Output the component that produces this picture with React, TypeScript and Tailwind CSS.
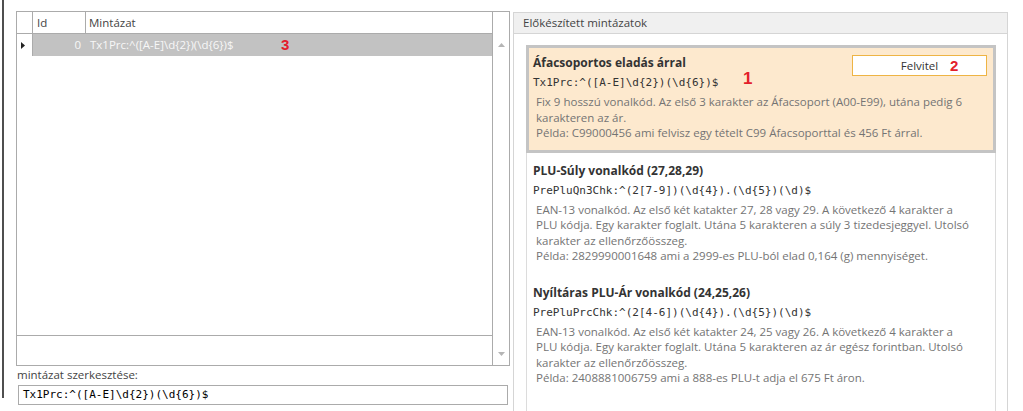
const items = [
  {
    title: 'Áfacsoportos eladás árral',
    pattern: 'Tx1Prc:^([A-E]\\d{2})(\\d{6})$',
    lines: [
      'Fix 9 hosszú vonalkód. Az első 3 karakter az Áfacsoport (A00-E99), utána pedig 6',
      'karakteren az ár.',
      'Példa: C99000456 ami felvisz egy tételt C99 Áfacsoporttal és 456 Ft árral.',
    ],
    selected: true,
  },
  {
    title: 'PLU-Súly vonalkód (27,28,29)',
    pattern: 'PrePluQn3Chk:^(2[7-9])(\\d{4}).(\\d{5})(\\d)$',
    lines: [
      'EAN-13 vonalkód. Az első két katakter 27, 28 vagy 29. A következő 4 karakter a',
      'PLU kódja. Egy karakter foglalt. Utána 5 karakteren a súly 3 tizedesjeggyel. Utolsó',
      'karakter az ellenőrzőösszeg.',
      'Példa: 2829990001648 ami a 2999-es PLU-ból elad 0,164 (g) mennyiséget.',
    ],
    selected: false,
  },
  {
    title: 'Nyíltáras PLU-Ár vonalkód (24,25,26)',
    pattern: 'PrePluPrcChk:^(2[4-6])(\\d{4}).(\\d{5})(\\d)$',
    lines: [
      'EAN-13 vonalkód. Az első két katakter 24, 25 vagy 26. A következő 4 karakter a',
      'PLU kódja. Egy karakter foglalt. Utána 5 karakteren az ár egész forintban. Utolsó',
      'karakter az ellenőrzőösszeg.',
      'Példa: 2408881006759 ami a 888-es PLU-t adja el 675 Ft áron.',
    ],
    selected: false,
  },
];

const editPattern = 'Tx1Prc:^([A-E]\\d{2})(\\d{6})$';

const mono = "font-['DejaVu_Sans_Mono',monospace] text-[11px]";

const PatternItem = ({ item }: { item: (typeof items)[number] }) => (
  <div
    className={
      item.selected
        ? 'relative -mx-px border-[3px] border-[#c4c4c4] bg-[#fde9ce] pt-[6px] pb-[9px] pl-[4px] pr-[6px]'
        : 'relative -mx-px border-[3px] border-transparent pt-[6px] pb-[8px] pl-[4px] pr-[6px]'
    }
  >
    <div className="flex h-[18px] items-start justify-between">
      <span className="text-[12px] font-bold leading-[18px] text-[#333]">{item.title}</span>
      {item.selected && (
        <button className="relative mt-[1px] flex h-[21px] w-[135px] items-center justify-center border border-[#eeb444] bg-white text-[#333]">
          Felvitel
          <span className="absolute left-[97px] top-[-1px] text-[15px] font-bold text-[#e3202b] font-['Liberation_Sans',sans-serif]">
            2
          </span>
        </button>
      )}
    </div>
    <div className={`mt-[2px] leading-[18px] text-[#333] ${mono}`}>{item.pattern}</div>
    <div className="mt-[2px] pl-[3px] leading-[15.5px] text-[#747474]">
      {item.lines.map((l) => (
        <div key={l} className="whitespace-nowrap">{l}</div>
      ))}
    </div>
    {item.selected && (
      <span className="absolute left-[214px] top-[18px] text-[17px] font-bold text-[#e3202b] font-['Liberation_Sans',sans-serif]">
        1
      </span>
    )}
  </div>
);

const ArrowUp = () => (
  <svg width="7" height="4" viewBox="0 0 7 4">
    <path d="M0 4 L3.5 0 L7 4 Z" fill="#b5b5b5" />
  </svg>
);

const ArrowDown = () => (
  <svg width="7" height="4" viewBox="0 0 7 4">
    <path d="M0 0 L3.5 4 L7 0 Z" fill="#b5b5b5" />
  </svg>
);

export default function App() {
  return (
    <div className="flex h-[411px] w-[1023px] overflow-hidden bg-white text-[11.5px] text-[#444] font-['Open_Sans',sans-serif]">
      {/* left dark edge */}
      <div className="pl-[2px]">
        <div className="h-[398px] w-[2px] bg-[#4f4f4f]" />
      </div>

      {/* pattern grid + editor */}
      <div className="ml-[12px] flex w-[494px] flex-col pt-[11px]">
        <div className="flex h-[355px] border border-[#ababab]">
          <div className="flex flex-1 flex-col">
            <div className="flex h-[22px] border-b border-[#ababab]">
              <div className="w-[16px] border-r border-[#ababab]" />
              <div className="w-[53px] border-r border-[#ababab] pl-[4px] leading-[21px]">Id</div>
              <div className="flex-1 pl-[3px] leading-[21px]">Mintázat</div>
            </div>
            <div className="flex h-[22px]">
              <div className="flex w-[16px] items-center justify-center border-r border-[#ababab] pr-[3px]">
                <svg width="4" height="7" viewBox="0 0 4 7">
                  <path d="M0 0 L4 3.5 L0 7 Z" fill="#222" />
                </svg>
              </div>
              <div className="flex flex-1 items-center bg-[#c2c2c2] text-[#f7f7f7]">
                <div className="w-[53px] pr-[5px] text-right">0</div>
                <div className="w-[195px] pl-[4px]">{editPattern}</div>
                <span className="text-[15px] font-bold text-[#e3202b] font-['Liberation_Sans',sans-serif]">
                  3
                </span>
              </div>
            </div>
            <div className="flex-1" />
            <div className="h-[30px] border-t border-[#ababab]" />
          </div>
          <div className="flex w-[17px] flex-col items-center border-l border-[#ababab] pt-[31px] pb-[9px]">
            <ArrowUp />
            <div className="flex-1" />
            <ArrowDown />
          </div>
        </div>
        <div className="mt-[1px] h-[16px] pl-[1px] leading-[16px]">mintázat szerkesztése:</div>
        <div className={`ml-[2px] mt-[2px] h-[20px] w-[490px] border border-[#ababab] pl-[4px] leading-[18px] text-black ${mono}`}>
          {editPattern}
        </div>
      </div>

      {/* prepared patterns panel */}
      <div className="ml-[3px] mt-[12px] flex w-[495px] flex-col border-x border-t border-[#d5d5d5]">
        <div className="h-[21px] border-b border-[#d5d5d5] bg-[#f0f0f0] pl-[9px] leading-[20px]">
          Előkészített mintázatok
        </div>
        <div className="ml-[12px] mr-[11px] mt-[11px] flex flex-1 flex-col border-x border-[#dcdcdc]">
          {items.map((it) => (
            <PatternItem key={it.title} item={it} />
          ))}
        </div>
      </div>
    </div>
  );
}
